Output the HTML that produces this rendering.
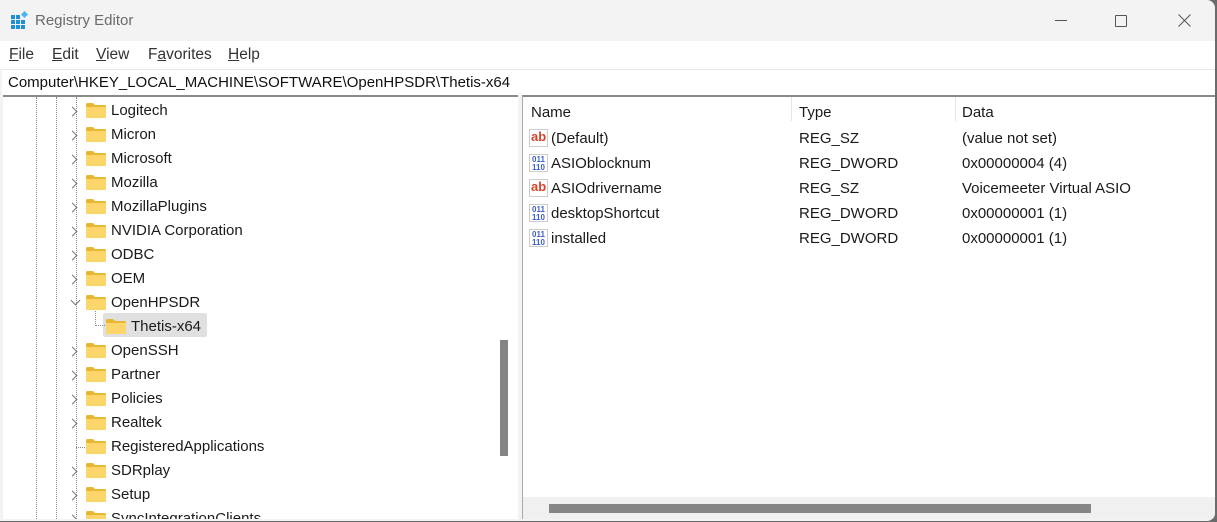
<!DOCTYPE html>
<html><head><meta charset="utf-8"><style>
*{margin:0;padding:0;box-sizing:border-box}
body{width:1217px;height:522px;overflow:hidden;background:#6b6b6b;font-family:"Liberation Sans",sans-serif;font-size:15px;color:#1a1a1a;position:relative}
.win{position:absolute;left:0;top:0;width:1215px;height:521px;background:#f3f3f3;border-radius:0 8px 8px 0;overflow:hidden}
.a{position:absolute;white-space:nowrap}
.title{left:35px;top:12px;color:#6a6a6a;font-size:15px}
.menu{left:0;top:41px;width:1215px;height:28px;background:#fff}
.menu span{position:absolute;top:5px;font-size:15.5px;color:#333}
.addr{left:2px;top:69px;width:1213px;height:26px;background:#fff;border-top:1px solid #e8e8e8}
.tree{left:3px;top:95px;width:515px;height:424px;background:#fff;border-top:2px solid #8a8a8a;overflow:hidden}
.list{left:522px;top:95px;width:693px;height:424px;background:#fff;border-top:2px solid #8a8a8a;border-left:1px solid #aaa;overflow:hidden}
.vl{position:absolute;width:0;border-left:1px dotted #888}
.fold{position:absolute;width:20px;height:15px}
.chev{position:absolute;width:7px;height:7px;border-right:1.3px solid #777;border-bottom:1.3px solid #777;transform:rotate(-45deg)}
.t{position:absolute;font-size:15px}
</style></head><body>
<div class="win">
<svg class="a" style="left:10px;top:10px" width="20" height="20" viewBox="0 0 20 20">
<g fill="#1f8fd8"><rect x="1" y="5" width="4" height="4"/><rect x="6" y="5" width="4" height="4"/><rect x="1" y="10" width="4" height="4"/><rect x="6" y="10" width="4" height="4"/><rect x="11" y="10" width="4" height="4"/><rect x="1" y="15" width="4" height="4"/><rect x="6" y="15" width="4" height="4"/><rect x="11" y="15" width="4" height="4"/></g>
<rect x="12" y="2" width="5" height="5" fill="#4fb4ee" transform="rotate(45 14.5 4.5)"/></svg>
<div class="a title">Registry Editor</div>
<div class="a" style="left:1055px;top:20px;width:12px;border-top:1px solid #555"></div>
<div class="a" style="left:1115px;top:15px;width:12px;height:12px;border:1px solid #555;border-radius:1px"></div>
<svg class="a" style="left:1178px;top:14px" width="13" height="13"><path d="M0.5 0.5L12.5 12.5M12.5 0.5L0.5 12.5" stroke="#555" stroke-width="1"/></svg>
<div class="a menu"><span style="left:9px"><u>F</u>ile</span><span style="left:52px"><u>E</u>dit</span><span style="left:96px"><u>V</u>iew</span><span style="left:148px">F<u>a</u>vorites</span><span style="left:228px"><u>H</u>elp</span></div>
<div class="a addr"><span class="a" style="left:6px;top:4px;font-size:15px;color:#111">Computer\HKEY_LOCAL_MACHINE\SOFTWARE\OpenHPSDR\Thetis-x64</span></div>
<div class="a tree" id="tree">
<div class="vl" style="left:33px;top:0;height:424px"></div>
<div class="vl" style="left:53px;top:0;height:424px"></div>
<div class="vl" style="left:73px;top:0;height:424px"></div>
<div class="a" style="left:100px;top:216px;width:104px;height:24px;background:#e0e0e0;border-radius:2px"></div>
<div class="vl" style="left:92px;top:205px;height:24px"></div>
<div class="a" style="left:92px;top:228px;width:10px;border-top:1px dotted #888"></div>
<div class="a" style="left:497px;top:243px;width:8px;height:116px;background:#858585"></div>
</div>
<div class="a list">
<div class="t" style="left:8px;top:7px">Name</div><div class="t" style="left:276px;top:7px">Type</div><div class="t" style="left:439px;top:7px">Data</div>
<div class="a" style="left:268px;top:0;height:24px;border-left:1px solid #e5e5e5"></div>
<div class="a" style="left:432px;top:0;height:24px;border-left:1px solid #e5e5e5"></div>
<div id="rows"></div>
<div class="a" style="left:0;top:400px;width:693px;height:22px;background:#f0f0f0"></div>
<div class="a" style="left:26px;top:407px;width:542px;height:9px;background:#858585"></div>
</div>
</div>
<script>
var names=["Logitech","Micron","Microsoft","Mozilla","MozillaPlugins","NVIDIA Corporation","ODBC","OEM","OpenHPSDR","Thetis-x64","OpenSSH","Partner","Policies","Realtek","RegisteredApplications","SDRplay","Setup","SyncIntegrationClients"];
var tr=document.getElementById('tree'),h='';
function folder(x,y){return '<svg class="fold" style="left:'+x+'px;top:'+y+'px" viewBox="0 0 20 15"><path d="M0 1.5Q0 0 1.5 0H7L9 2H18.5Q20 2 20 3.5V13.5Q20 15 18.5 15H1.5Q0 15 0 13.5Z" fill="#e8b832"/><path d="M0 4H20V13.5Q20 15 18.5 15H1.5Q0 15 0 13.5Z" fill="#fcd66a"/></svg>';}
names.forEach(function(n,i){var y=i*24+2;var child=(n=="Thetis-x64");var fx=child?103:83;
h+=folder(fx,y+4);
h+='<div class="t" style="left:'+(child?128:108)+'px;top:'+(y+3)+'px">'+n+'</div>';
if(n=="OpenHPSDR")h+='<div class="chev" style="left:69px;top:'+(y+6)+'px;transform:rotate(45deg)"></div>';
else if(!child&&n!="RegisteredApplications")h+='<div class="chev" style="left:66px;top:'+(y+9)+'px;background:#fff"></div>';
else if(n=="RegisteredApplications")h+='<div class="a" style="left:73px;top:'+(y+12)+'px;width:9px;border-top:1px dotted #888"></div>';
});
tr.insertAdjacentHTML('beforeend',h);
var rows=[["ab","(Default)","REG_SZ","(value not set)"],["01","ASIOblocknum","REG_DWORD","0x00000004 (4)"],["ab","ASIOdrivername","REG_SZ","Voicemeeter Virtual ASIO"],["01","desktopShortcut","REG_DWORD","0x00000001 (1)"],["01","installed","REG_DWORD","0x00000001 (1)"]];
var r='';
rows.forEach(function(a,i){var y=32+i*25;
if(a[0]=="ab")r+='<div class="a" style="left:6px;top:'+y+'px;width:19px;height:18px;border:1px solid #ccc;background:#fff"><span class="a" style="left:1px;top:-1px;font-size:13px;font-weight:bold;color:#d4442a">ab</span></div>';
else r+='<div class="a" style="left:6px;top:'+y+'px;width:19px;height:18px;border:1px solid #ccc;background:#fff;font-size:8px;line-height:8px;font-weight:bold;color:#3a5fc8;text-align:center;padding-top:1px">011<br>110</div>';
r+='<div class="t" style="left:28px;top:'+(y+1)+'px">'+a[1]+'</div><div class="t" style="left:276px;top:'+(y+1)+'px">'+a[2]+'</div><div class="t" style="left:439px;top:'+(y+1)+'px">'+a[3]+'</div>';});
document.getElementById('rows').innerHTML=r;
</script>
</body></html>
